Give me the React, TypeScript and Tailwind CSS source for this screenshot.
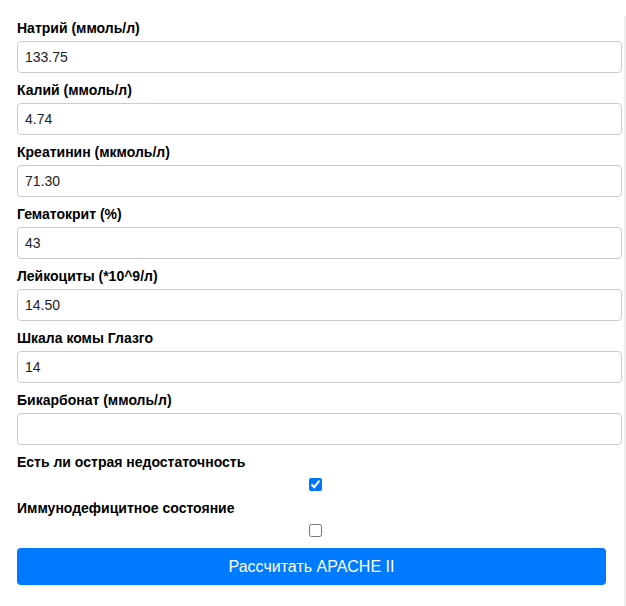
const fields = [
  { label: 'Натрий (ммоль/л)', value: '133.75' },
  { label: 'Калий (ммоль/л)', value: '4.74' },
  { label: 'Креатинин (мкмоль/л)', value: '71.30' },
  { label: 'Гематокрит (%)', value: '43' },
  { label: 'Лейкоциты (*10^9/л)', value: '14.50' },
  { label: 'Шкала комы Глазго', value: '14' },
  { label: 'Бикарбонат (ммоль/л)', value: '' },
];

const App = () => {
  return (
    <div className="bg-white pt-4 font-['Liberation_Sans',Arial,sans-serif]">
      <div className="min-h-[590px] w-[626px] border-r-2 border-[#eeeeee] pl-[17px] pt-[2px]">
        <div className="w-[589px]">
          {fields.map((f) => (
            <div key={f.label} className="mb-[7px]">
              <label className="mb-[3px] block text-[14px] font-bold leading-5 text-black">{f.label}</label>
              <input
                type="text"
                defaultValue={f.value}
                className="block h-8 w-[605px] rounded-[4px] border border-[#cccccc] pl-[7px] text-[14px] text-[#222222] outline-none"
              />
            </div>
          ))}

          <label className="block text-[14px] font-bold leading-5 text-black">Есть ли острая недостаточность</label>
          <input type="checkbox" defaultChecked className="m-0 mb-[7px] ml-[292px] mt-[6px] block h-[13px] w-[13px]" />

          <label className="block text-[14px] font-bold leading-5 text-black">Иммунодефицитное состояние</label>
          <input type="checkbox" className="m-0 ml-[292px] mt-[6px] block h-[13px] w-[13px]" />

          <button
            type="button"
            className="mt-[11px] block h-[37px] w-full rounded-[4px] bg-[#007bff] text-[16px] text-white"
          >
            Рассчитать APACHE II
          </button>
        </div>
      </div>
    </div>
  );
};

export default App;
